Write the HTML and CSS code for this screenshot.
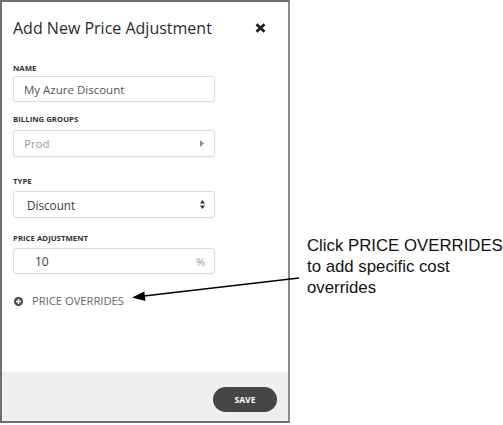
FILE: index.html
```html
<!DOCTYPE html>
<html>
<head>
<meta charset="utf-8">
<link rel="stylesheet" href="styles.css">
</head>
<body>
<div class="page">
  <div class="dialog">
    <div class="dialog-header">
      <h1 class="title">Add New Price Adjustment</h1>
      <svg class="close" width="11" height="10" viewBox="0 0 11 10">
        <path d="M1.5 1.2 L9.5 8.8 M9.5 1.2 L1.5 8.8" stroke="#1e1e1e" stroke-width="2.8" fill="none"/>
      </svg>
    </div>
    <div class="dialog-body">
      <div class="field field-name">
        <div class="label">NAME</div>
        <div class="input"><span class="value">My Azure Discount</span></div>
      </div>
      <div class="field field-billing">
        <div class="label">BILLING GROUPS</div>
        <div class="input input-tall"><span class="placeholder">Prod</span>
          <svg class="caret-right" width="4" height="7" viewBox="0 0 4 7"><path d="M0 0 L4 3.5 L0 7 Z" fill="#8a8a8a"/></svg>
        </div>
      </div>
      <div class="field field-type">
        <div class="label">TYPE</div>
        <div class="input input-tall select"><span class="value dark">Discount</span>
          <svg class="updown" width="5" height="9" viewBox="0 0 5 9"><path d="M0 3.6 L2.5 0 L5 3.6 Z M0 5.4 L2.5 9 L5 5.4 Z" fill="#333"/></svg>
        </div>
      </div>
      <div class="field field-adjust">
        <div class="label">PRICE ADJUSTMENT</div>
        <div class="input number"><span class="value dark">10</span><span class="unit">%</span></div>
      </div>
      <div class="overrides">
        <svg class="plus" width="9" height="9" viewBox="0 0 9 9">
          <circle cx="4.5" cy="4.5" r="4.5" fill="#4a4a4a"/>
          <path d="M4.5 2 V7 M2 4.5 H7" stroke="#fff" stroke-width="1.5"/>
        </svg>
        <span class="overrides-text">PRICE OVERRIDES</span>
      </div>
    </div>
    <div class="dialog-footer">
      <button class="save">SAVE</button>
    </div>
  </div>
  <div class="note">Click PRICE OVERRIDES<br>to add specific cost<br>overrides</div>
  <svg class="arrow" width="503" height="425" viewBox="0 0 503 425">
    <line x1="299" y1="278" x2="144" y2="296" stroke="#000" stroke-width="1.4"/>
    <polygon points="132,297.5 145.4,301 144.4,291.5" fill="#000"/>
  </svg>
</div>
</body>
</html>
```
FILE: styles.css
```css
html, body {
  margin: 0;
  padding: 0;
  background: #fff;
}
.page {
  position: relative;
  width: 503px;
  height: 425px;
  display: flex;
  align-items: flex-start;
  font-family: "Open Sans", sans-serif;
}
.dialog {
  box-sizing: border-box;
  width: 290px;
  height: 423px;
  border: 2px solid #6f6f6f;
  border-right-color: #8a8a8a;
  display: flex;
  flex-direction: column;
  background: #fff;
}
.dialog-header {
  display: flex;
  justify-content: space-between;
  align-items: center;
  padding: 14px 22px 0 11px;
}
.title {
  margin: 0;
  font-size: 16px;
  line-height: 24px;
  font-weight: 400;
  color: #2b2b2b;
}
.close {
  display: block;
}
.dialog-body {
  flex: 1;
  padding-left: 11px;
}
.field {
  width: 202px;
}
.field-name { margin-top: 23px; }
.field-billing { margin-top: 12px; }
.field-type { margin-top: 19px; }
.field-adjust { margin-top: 15px; }
.label {
  font-size: 7.8px;
  line-height: 10px;
  font-weight: 700;
  color: #333;
  margin-bottom: 5px;
}
.field-name .label { margin-bottom: 3px; }
.field-billing .label { margin-bottom: 6px; }
.input {
  box-sizing: border-box;
  height: 26px;
  border: 1px solid #dcdcdc;
  border-radius: 3px;
  box-shadow: 0 1px 1px rgba(0,0,0,0.04);
  display: flex;
  align-items: center;
  padding: 0 9px 0 10px;
  font-size: 11.5px;
  color: #555;
}
.input-tall { height: 27px; }
.value { flex: 1; }
.dark { color: #3a3a3a; }
.placeholder { flex: 1; color: #9a9a9a; }
.select { padding-left: 13px; font-size: 11.7px; }
.number { padding-left: 21px; font-size: 12px; }
.unit { color: #9a9a9a; font-size: 11px; }
.caret-right { display: block; margin-right: 1px; }
.updown { display: block; }
.overrides {
  display: flex;
  align-items: center;
  margin-top: 20px;
  padding-left: 1px;
}
.plus { display: block; margin-right: 9px; }
.overrides-text {
  font-size: 11.2px;
  line-height: 14px;
  color: #666;
}
.dialog-footer {
  height: 49px;
  box-sizing: border-box;
  background: #efefef;
  display: flex;
  justify-content: flex-end;
  align-items: flex-start;
  padding: 15px 11px 0 0;
}
.save {
  width: 64px;
  height: 25px;
  border: none;
  border-radius: 13px;
  background: #454545;
  color: #fff;
  font-family: "Open Sans", sans-serif;
  font-size: 8.5px;
  font-weight: 700;
  padding: 0;
}
.note {
  margin-left: 17px;
  margin-top: 235px;
  font-family: "Liberation Sans", Arial, sans-serif;
  font-size: 16.8px;
  line-height: 21px;
  color: #111;
}
.arrow {
  position: absolute;
  left: 0;
  top: 0;
  pointer-events: none;
}
```
